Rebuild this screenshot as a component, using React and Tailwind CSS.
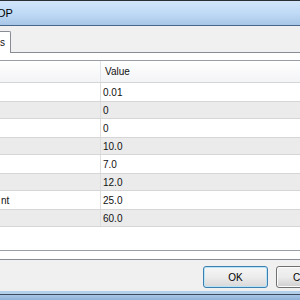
export default function App() {
  const rows = [
    { l: "", v: "0.01" },
    { l: "", v: "0" },
    { l: "", v: "0" },
    { l: "", v: "10.0" },
    { l: "", v: "7.0" },
    { l: "", v: "12.0" },
    { l: "nt", v: "25.0" },
    { l: "", v: "60.0" },
  ];
  return (
    <div className="w-[300px] h-[300px] overflow-hidden flex flex-col bg-[#f0f0f0] font-['Liberation_Sans',Arial,sans-serif] text-[10px] text-[#111]">
      {/* title bar */}
      <div className="h-[26px] shrink-0 flex flex-col">
        <div className="h-px bg-[#2a2f36]" />
        <div className="flex-1 flex items-center bg-gradient-to-b from-[#d2e6fa] via-[#c0dbf6] to-[#a8c6e7]">
          <span className="-ml-[3px] text-[11px] leading-none text-black">OP</span>
        </div>
        <div className="h-px bg-[#46668a]" />
      </div>

      {/* tab strip */}
      <div className="h-[27px] shrink-0 flex items-end">
        <div className="w-[11px] h-[22px] shrink-0 bg-white border-t border-r border-[#898c95] rounded-tr-[2px] flex items-center justify-end pr-[5px] pb-[1px] whitespace-nowrap">
          <span>s</span>
        </div>
        <div className="flex-1 h-full border-b border-[#898c95]" />
      </div>

      {/* tab page */}
      <div className="h-[207px] shrink-0 bg-white border-b border-[#898c95] pt-[7px] pb-[8px] flex flex-col">
        <div className="flex-1 border-y border-[#9a9ea6] flex flex-col">
          {/* header */}
          <div className="h-[22px] shrink-0 flex border-b border-[#d5d5d5] bg-gradient-to-b from-white to-[#f3f4f6]">
            <div className="w-[101px] shrink-0 border-r border-[#e1e4e8]" />
            <div className="flex-1 flex items-center pl-[4px]">Value</div>
          </div>
          {rows.map((r, i) => (
            <div
              key={i}
              className={
                i % 2 === 1
                  ? "h-[18px] shrink-0 flex bg-[#ebebeb] border-y border-[#d6d6d6]"
                  : "h-[18px] shrink-0 flex bg-white"
              }
            >
              <div className="w-[101px] shrink-0 border-r border-[#dedede] flex items-center pl-[1px] whitespace-nowrap">
                {r.l}
              </div>
              <div className="flex-1 flex items-center pl-[2px]">{r.v}</div>
            </div>
          ))}
          <div className="flex-1" />
        </div>
      </div>

      {/* buttons */}
      <div className="h-[31px] shrink-0 flex items-start pt-[6px] pl-[203px] gap-[8px]">
        <button className="w-[65px] h-[22px] shrink-0 rounded-[3px] border border-[#3c7fb1] bg-gradient-to-b from-[#f6f6f6] via-[#ececec] to-[#d8d8d8] shadow-[inset_0_0_0_1px_#b9e3f7] text-[10px] text-black">
          OK
        </button>
        <button className="w-[65px] h-[22px] shrink-0 rounded-[3px] border border-[#707070] bg-gradient-to-b from-[#f2f2f2] via-[#ebebeb] to-[#cfcfcf] shadow-[inset_0_0_0_1px_#fcfcfc] text-[10px] text-black">
          Cancel
        </button>
      </div>

      {/* bottom frame */}
      <div className="flex-1 flex flex-col">
        <div className="h-[3px] bg-[#b4cfec]" />
        <div className="h-px bg-[#3c4c5e]" />
        <div className="flex-1 bg-gradient-to-b from-[#a8c5e6] to-[#8fb2d9]" />
      </div>
    </div>
  );
}
